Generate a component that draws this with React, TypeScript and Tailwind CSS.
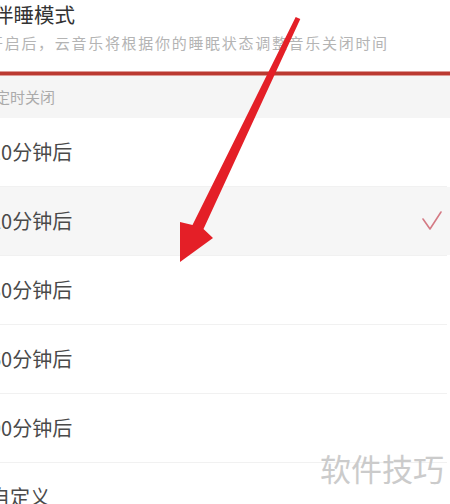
import React from "react";

const rows = [
  { label: "10分钟后", selected: false },
  { label: "20分钟后", selected: true },
  { label: "30分钟后", selected: false },
  { label: "60分钟后", selected: false },
  { label: "90分钟后", selected: false },
  { label: "自定义", selected: false },
];

export default function App() {
  return (
    <div className="relative w-[450px] h-[504px] overflow-hidden bg-white font-['Noto_Sans_CJK_SC','Noto_Sans',sans-serif]">
      <div className="flex flex-col h-[71px]">
        <div className="ml-[-7px] text-[20.5px] leading-[28px] text-[#333333] whitespace-nowrap">伴睡模式</div>
        <div className="ml-[-12px] mt-[5px] text-[15px] leading-[20px] tracking-[1.7px] text-[#b4b4b4] whitespace-nowrap">
          开启后，云音乐将根据你的睡眠状态调整音乐关闭时间
        </div>
      </div>
      <div className="h-[5px] border-y border-[#dd9a96] bg-[#bb3a31]" />
      <div className="h-[42px] flex items-center bg-[#f5f5f5]">
        <span className="ml-[-5px] text-[15px] text-[#ababab] whitespace-nowrap">定时关闭</span>
      </div>
      {rows.map((r) => (
        <div key={r.label}>
          <div
            className={
              r.selected
                ? "h-[68px] flex items-center justify-between bg-[#f6f6f6]"
                : "h-[68px] flex items-center justify-between"
            }
          >
            <span className="ml-[-10px] text-[20px] text-[#4a4a4a] whitespace-nowrap">{r.label}</span>
            {r.selected && (
              <svg width="24" height="24" viewBox="0 0 24 24" className="mr-[6px]">
                <polyline
                  points="3,10 10,20 21,3"
                  fill="none"
                  stroke="#d47a84"
                  strokeWidth="1.6"
                  strokeLinecap="round"
                  strokeLinejoin="round"
                />
              </svg>
            )}
          </div>
          <div className="h-px mr-[3px] bg-[#f1f1f1]" />
        </div>
      ))}
      <div className="absolute left-[320px] top-[451px] text-[31px] leading-[34px] text-[#cbcbcb] whitespace-nowrap">
        软件技巧
      </div>
      <svg className="absolute left-0 top-0" width="450" height="504" viewBox="0 0 450 504">
        <polygon
          points="300.3,19.1 295.7,16.9 192.5,225 180,222 180,262 213,238 203.5,229"
          fill="#e41f27"
          strokeLinejoin="round"
        />
      </svg>
    </div>
  );
}
